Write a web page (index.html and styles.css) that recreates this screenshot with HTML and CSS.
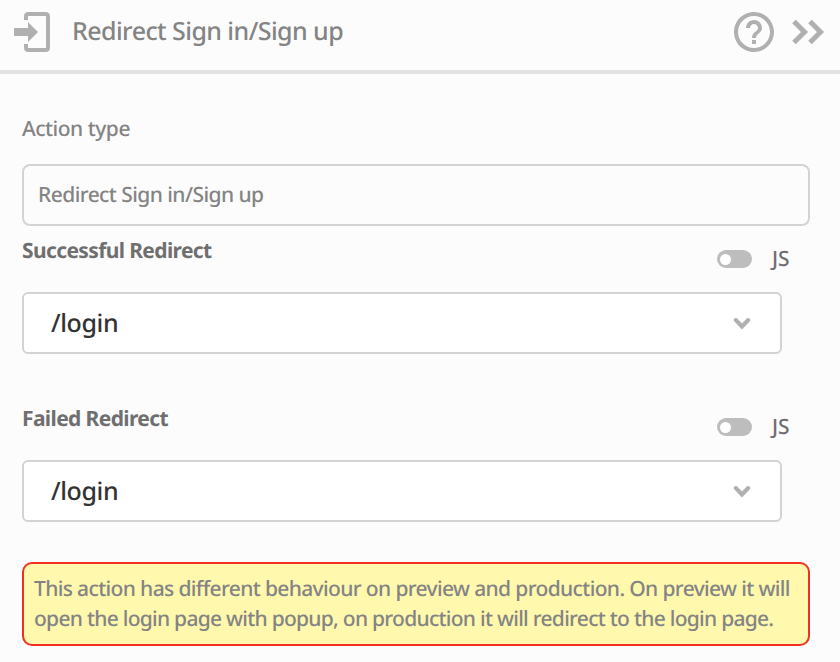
FILE: index.html
```html
<!DOCTYPE html>
<html lang="en">
<head>
<meta charset="utf-8">
<title>Redirect Sign in/Sign up</title>
<link rel="stylesheet" href="styles.css">
</head>
<body>
<header class="header">
  <svg class="login-icon" width="36" height="40" viewBox="0 0 36 40"><path d="M12 8V4.500Q12 2 14.500 2H31.500Q34 2 34 4.500V35.500Q34 38 31.500 38H14.500Q12 38 12 35.500V32" fill="none" stroke="#b0b0b0" stroke-width="4"/><path d="M0 16H14V10L24 20L14 30V24H0Z" fill="#b0b0b0"/></svg>
  <h1 class="title">Redirect Sign in/Sign up</h1>
  <svg class="help-icon" width="40" height="40" viewBox="0 0 24 24" fill="#b0b0b0"><path d="M11 18h2v-2h-2v2zm1-16C6.480 2 2 6.480 2 12s4.480 10 10 10 10-4.480 10-10S17.520 2 12 2zm0 18c-4.410 0-8-3.590-8-8s3.590-8 8-8 8 3.590 8 8-3.590 8-8 8zm0-14c-2.210 0-4 1.790-4 4h2c0-1.100.9-2 2-2s2 .9 2 2c0 2-3 1.750-3 5h2c0-2.250 3-2.500 3-5 0-2.210-1.790-4-4-4z"/></svg>
  <svg class="collapse-icon" width="34" height="26" viewBox="0 0 34 26" fill="none" stroke="#b0b0b0" stroke-width="5"><path d="M2 2.500L12.500 13L2 23.500M18 2.500L28.500 13L18 23.500"/></svg>
</header>
<main class="panel">
  <div class="label">Action type</div>
  <div class="input"><span class="input-text">Redirect Sign in/Sign up</span></div>
  <section class="field">
    <div class="field-head"><span class="name">Successful Redirect</span><span class="toggle"><span class="knob"></span></span><span class="js">JS</span></div>
    <div class="select"><span class="value">/login</span><svg width="18" height="14" viewBox="0 0 18 14"><path d="M2.800 4L9 10.500L15.200 4" fill="none" stroke="#b0b0b0" stroke-width="4" stroke-linecap="round"/></svg></div>
  </section>
  <section class="field">
    <div class="field-head"><span class="name">Failed Redirect</span><span class="toggle"><span class="knob"></span></span><span class="js">JS</span></div>
    <div class="select"><span class="value">/login</span><svg width="18" height="14" viewBox="0 0 18 14"><path d="M2.800 4L9 10.500L15.200 4" fill="none" stroke="#b0b0b0" stroke-width="4" stroke-linecap="round"/></svg></div>
  </section>
  <div class="alert"><div class="line-one">This action has different behaviour on preview and production. On preview it will</div><div class="line-two">open the login page with popup, on production it will redirect to the login page.</div></div>
</main>
</body>
</html>
```
FILE: styles.css
```css
* { box-sizing: border-box; }
body {
  margin: 0;
  height: 662px;
  overflow: hidden;
  background: #fcfcfc;
  color: #848484;
  font: 500 21px/30px "Noto Sans", "Open Sans", sans-serif;
  letter-spacing: -0.57px;
  text-rendering: geometricPrecision;
  white-space: nowrap;
}
svg { display: block; flex: none; }
.header {
  display: flex;
  height: 74px;
  padding: 12px 14px 0;
  border-bottom: 4px solid #e2e2e2;
}
.title { margin: 3px 0 0 22px; font-size: 25px; line-height: 32px; font-weight: 500; flex: 1; }
.help-icon { overflow: visible; transform: scale(1.2); }
.collapse-icon { margin: 7px 0 0 18px; }
.panel { padding: 40px 30px 0 22px; }
.label { height: 30px; letter-spacing: -0.5px; }
.input {
  height: 62px;
  margin-top: 20px;
  padding: 14px;
  border: 2px solid #d3d3d3;
  border-radius: 8px;
}
.field { width: 760px; height: 168px; }
.field-head { display: flex; height: 66px; margin-right: -2px; padding-top: 10px; }
.name { flex: 1; color: #6f6f6f; font-weight: 700; letter-spacing: -0.62px; }
.toggle { width: 35px; height: 18px; margin-top: 14px; padding: 4px 3px; border-radius: 9px; background: #bdbdbd; }
.knob { display: block; width: 11px; height: 11px; border-radius: 50%; background: #fff; }
.js { width: 20px; margin: 8px -8px 0 20px; color: #6f6f6f; letter-spacing: 0; }
.select {
  display: flex;
  align-items: center;
  height: 62px;
  padding: 0 29px 0 27px;
  border: 2px solid #d3d3d3;
  border-radius: 6px;
  background: #fff;
}
.value { flex: 1; color: #333; font-size: 25px; letter-spacing: -0.4px; }
.alert {
  height: 84px;
  padding: 10px;
  border: 2px solid #ef3124;
  border-radius: 10px;
  background: #fff8ad;
}
.line-one { letter-spacing: -0.64px; }
.line-two { letter-spacing: -0.73px; }
```
